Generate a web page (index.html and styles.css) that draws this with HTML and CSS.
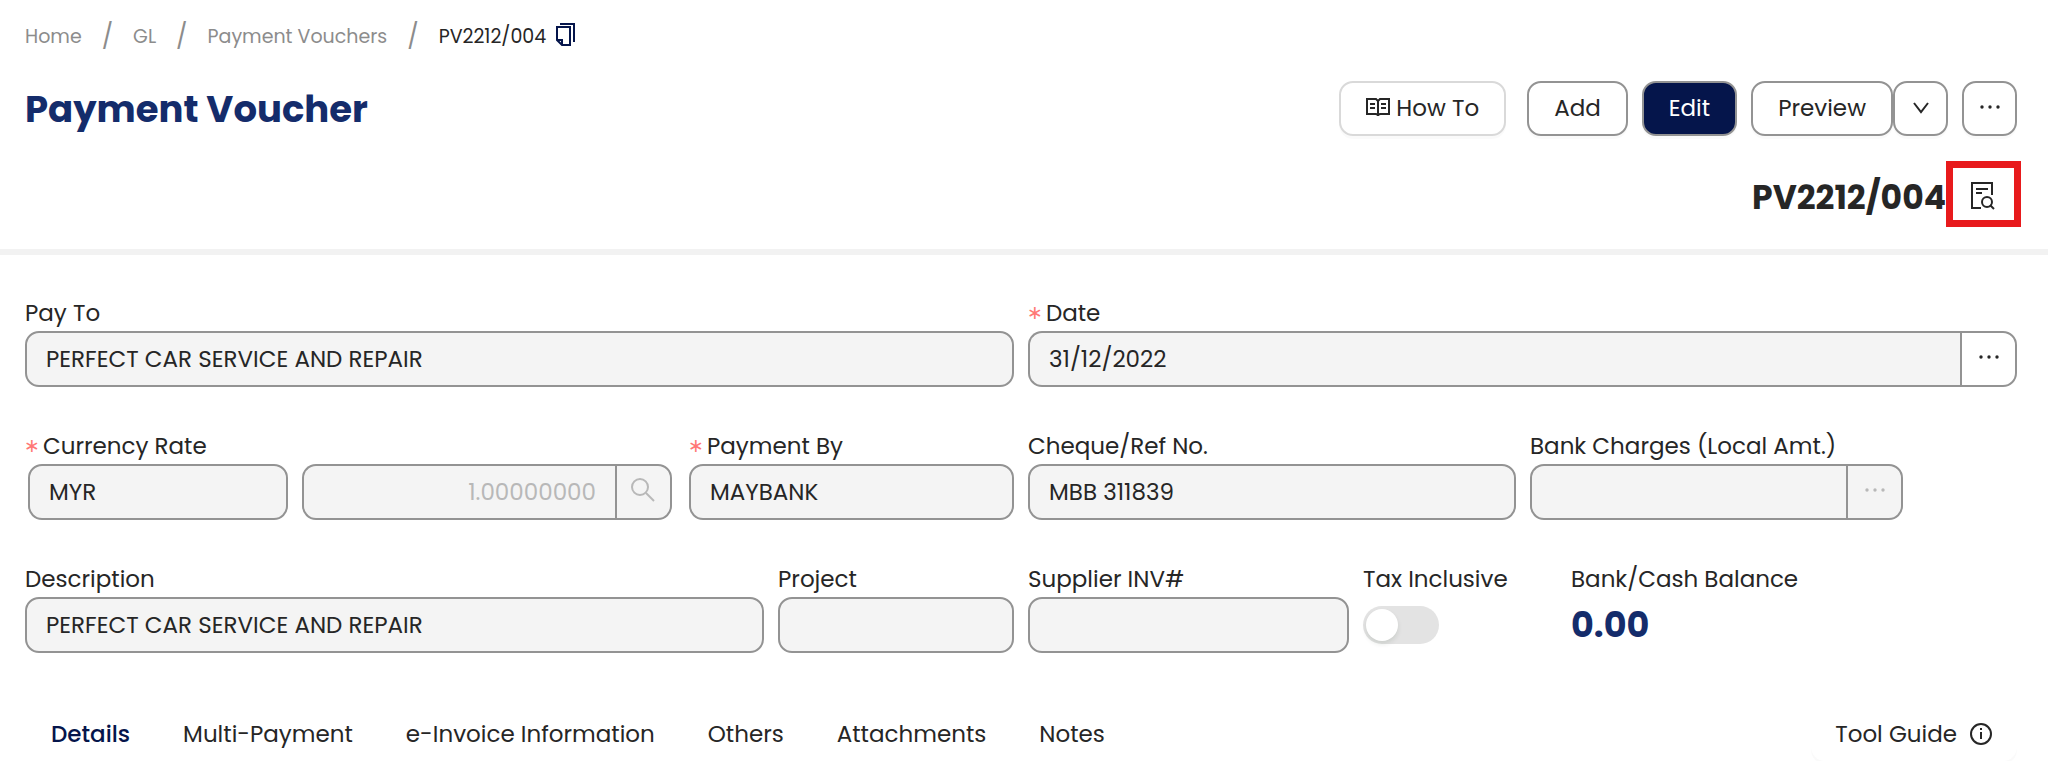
FILE: index.html
```html
<!DOCTYPE html>
<html lang="en">
<head>
    <meta charset="UTF-8">
    <meta name="viewport" content="width=device-width, initial-scale=1.0">
    <title>Payment Voucher</title>
    <link rel="stylesheet" href="styles.css">
</head>
<body>
    <header class="page-header">
        <nav class="breadcrumb" aria-label="Breadcrumb">
            <a href="#">Home</a>
            <span class="slash">/</span>
            <a href="#">GL</a>
            <span class="slash">/</span>
            <a href="#">Payment Vouchers</a>
            <span class="slash">/</span>
            <span class="current">PV2212/004</span>
            <button class="copy-btn" type="button" aria-label="Copy">
                <svg width="19" height="23" viewBox="0 0 19 23" fill="none" stroke="currentColor" stroke-width="2">
                    <path d="M4 1h14v18"/>
                    <path d="M1 4h13v18H6l-5-5z"/>
                    <path d="M1 17h5v5"/>
                </svg>
            </button>
        </nav>

        <div class="title-row">
            <h1>Payment Voucher</h1>
            <div class="actions">
                <button class="btn btn-light" type="button">
                    <svg width="24" height="19" viewBox="0 0 24 19" fill="none" stroke="currentColor" stroke-width="2">
                        <path d="M12 3l-2-2H1v15h9l2 1 2-1h9V1h-9z"/>
                        <path d="M12 3v15M4 6h5M4 10h5M15 6h5M15 10h5"/>
                    </svg>
                    How To
                </button>
                <button class="btn" type="button">Add</button>
                <button class="btn btn-primary" type="button">Edit</button>
                <div class="btn-group">
                    <button class="btn" type="button">Preview</button>
                    <button class="btn btn-square" type="button" aria-label="More previews">
                        <svg width="16" height="12" viewBox="0 0 16 12" fill="none" stroke="currentColor" stroke-width="2">
                            <path d="M1 1l7 9 7-9"/>
                        </svg>
                    </button>
                </div>
                <button class="btn btn-square" type="button" aria-label="More actions">
                    <svg width="22" height="6" viewBox="0 0 22 6" fill="currentColor">
                        <circle cx="3" cy="2" r="1.7"/><circle cx="11" cy="2" r="1.7"/><circle cx="19" cy="2" r="1.7"/>
                    </svg>
                </button>
            </div>
        </div>

        <div class="doc-row">
            <h2>PV2212/004</h2>
            <button class="audit-btn" type="button" aria-label="View audit log">
                <svg width="24" height="28" viewBox="0 0 24 28" fill="none" stroke="currentColor" stroke-width="2">
                    <path d="M10 26H1V1h20v12"/>
                    <path d="M5 7h12M5 11h6"/>
                    <circle cx="16" cy="20" r="5"/>
                    <path d="M19 23l4 4"/>
                </svg>
            </button>
        </div>
    </header>

    <main>
        <form class="voucher-form">
            <div class="row row-payee">
                <div class="field">
                    <label for="payTo">Pay To</label>
                    <input id="payTo" type="text" value="PERFECT CAR SERVICE AND REPAIR" readonly>
                </div>
                <div class="field">
                    <label class="required" for="date">Date</label>
                    <div class="input-group">
                        <input id="date" type="text" value="31/12/2022" readonly>
                        <button class="addon" type="button" aria-label="Date options">
                            <svg width="22" height="8" viewBox="0 0 22 8" fill="currentColor">
                                <circle cx="3" cy="2" r="1.7"/><circle cx="11" cy="2" r="1.7"/><circle cx="19" cy="2" r="1.7"/>
                            </svg>
                        </button>
                    </div>
                </div>
            </div>

            <div class="row row-payment">
                <div class="field">
                    <label class="required" for="currency">Currency Rate</label>
                    <div class="currency">
                        <input id="currency" type="text" value="MYR" readonly>
                        <div class="input-group">
                            <input class="rate" type="text" value="1.00000000" aria-label="Rate" disabled>
                            <button class="addon" type="button" aria-label="Search rate" disabled>
                                <svg width="24" height="28" viewBox="0 0 24 28" fill="none" stroke="currentColor" stroke-width="2">
                                    <circle cx="9" cy="9" r="8"/>
                                    <path d="M15 15l8 8"/>
                                </svg>
                            </button>
                        </div>
                    </div>
                </div>
                <div class="field">
                    <label class="required" for="paymentBy">Payment By</label>
                    <input id="paymentBy" type="text" value="MAYBANK" readonly>
                </div>
                <div class="field">
                    <label for="cheque">Cheque/Ref No.</label>
                    <input id="cheque" type="text" value="MBB 311839" readonly>
                </div>
                <div class="field">
                    <label for="charges">Bank Charges (Local Amt.)</label>
                    <div class="input-group">
                        <input id="charges" type="text" readonly>
                        <button class="addon" type="button" aria-label="Bank charge options" disabled>
                            <svg width="22" height="8" viewBox="0 0 22 8" fill="currentColor">
                                <circle cx="3" cy="2" r="1.7"/><circle cx="11" cy="2" r="1.7"/><circle cx="19" cy="2" r="1.7"/>
                            </svg>
                        </button>
                    </div>
                </div>
            </div>

            <div class="row row-details">
                <div class="field">
                    <label for="description">Description</label>
                    <input id="description" type="text" value="PERFECT CAR SERVICE AND REPAIR" readonly>
                </div>
                <div class="field">
                    <label for="project">Project</label>
                    <input id="project" type="text" readonly>
                </div>
                <div class="field">
                    <label for="supplierInv">Supplier INV#</label>
                    <input id="supplierInv" type="text" readonly>
                </div>
                <div class="field">
                    <label for="taxInclusive">Tax Inclusive</label>
                    <div class="control">
                        <input id="taxInclusive" class="switch" type="checkbox" role="switch">
                    </div>
                </div>
                <div class="field">
                    <label for="balance">Bank/Cash Balance</label>
                    <output id="balance" class="control balance">0.00</output>
                </div>
            </div>
        </form>

        <div class="tab-bar">
            <div class="tabs" role="tablist">
                <button class="tab active" type="button" role="tab" aria-selected="true">Details</button>
                <button class="tab" type="button" role="tab">Multi-Payment</button>
                <button class="tab" type="button" role="tab">e-Invoice Information</button>
                <button class="tab" type="button" role="tab">Others</button>
                <button class="tab" type="button" role="tab">Attachments</button>
                <button class="tab" type="button" role="tab">Notes</button>
            </div>
            <button class="tool-guide" type="button">
                Tool Guide
                <svg width="24" height="24" viewBox="0 0 24 24" fill="none" stroke="currentColor" stroke-width="2">
                    <circle cx="12" cy="12" r="10"/>
                    <path d="M12 10v7M12 6v2"/>
                </svg>
            </button>
        </div>
    </main>
</body>
</html>
```
FILE: styles.css
```css
* {
    box-sizing: border-box;
}

body {
    margin: 0;
    background: #fff;
    color: #262626;
    font-family: 'Poppins', 'Inter', sans-serif;
    font-size: 23px;
    line-height: 34px;
}

button,
input {
    font: inherit;
    color: inherit;
}

button {
    cursor: pointer;
}

h1,
h2 {
    margin: 0;
    font-weight: 700;
}

/* Header */
.page-header {
    padding: 20px 31px 22px 25px;
    border-bottom: 6px solid #f2f2f2;
}

.breadcrumb {
    display: flex;
    align-items: center;
    height: 34px;
    font-size: 19px;
    color: #8c8c8c;
}

.breadcrumb a {
    color: inherit;
    text-decoration: none;
}

.slash {
    margin: 0 20px;
    font-size: 24px;
}

.breadcrumb .current {
    color: #262626;
}

.copy-btn {
    display: flex;
    margin-left: 10px;
    padding: 0 0 6px;
    border: 0;
    background: none;
    color: #05154b;
}

.title-row {
    display: flex;
    justify-content: space-between;
    align-items: center;
    margin-top: 27px;
}

.title-row h1 {
    font-size: 37px;
    line-height: 48px;
    color: #142c6b;
}

.actions {
    display: flex;
    gap: 14px;
}

.btn {
    display: flex;
    align-items: center;
    justify-content: center;
    gap: 6px;
    height: 55px;
    padding: 0 25px 2px;
    border: 2px solid #939393;
    border-radius: 14px;
    background: #fff;
    box-shadow: 0 3px 0 rgba(0, 0, 0, 0.02);
}

.btn-light {
    margin-right: 7px;
    border-color: #d9d9d9;
}

.btn-primary {
    background: #05154b;
    color: #fff;
}

.btn-square {
    width: 55px;
    padding: 0 0 2px;
}

.btn-group {
    display: flex;
}

.doc-row {
    display: flex;
    justify-content: flex-end;
    align-items: center;
    margin-top: 25px;
    margin-right: -4px;
}

.doc-row h2 {
    padding-top: 8px;
    font-size: 33px;
    line-height: 40px;
}

.audit-btn {
    display: flex;
    align-items: center;
    justify-content: center;
    width: 75px;
    height: 66px;
    padding: 4px 2px 0 0;
    border: 7px solid #e81a1c;
    background: #fff;
}

/* Form */
.voucher-form {
    display: grid;
    gap: 43px;
    padding: 42px 31px 0 25px;
}

.row {
    display: grid;
    gap: 14px;
}

.row-payee {
    grid-template-columns: 1fr 1fr;
}

.row-payment {
    grid-template-columns: 650fr 325fr 488fr 373fr 100fr;
}

.row-details {
    grid-template-columns: 739fr 236fr 321fr 194fr 446fr;
}

.field {
    display: flex;
    flex-direction: column;
    min-width: 0;
}

.field label {
    height: 34px;
    line-height: 32px;
    white-space: nowrap;
}

.required::before {
    content: '∗';
    margin: 0 3px 0 -1px;
    font-family: 'DejaVu Sans', sans-serif;
    font-size: 19px;
    line-height: 1;
    vertical-align: 2px;
    color: #ff7875;
}

.field input[type="text"] {
    width: 100%;
    min-width: 0;
    height: 56px;
    padding: 0 19px;
    border: 2px solid #939393;
    border-radius: 14px;
    background: #f4f4f4;
    outline: none;
}

.input-group {
    display: flex;
    min-width: 0;
}

.field .input-group input {
    flex: 1;
    border-right: 0;
    border-radius: 14px 0 0 14px;
}

.addon {
    display: flex;
    align-items: center;
    justify-content: center;
    flex: none;
    width: 57px;
    padding: 0;
    border: 2px solid #939393;
    border-radius: 0 14px 14px 0;
    background: #fff;
}

.addon:disabled,
.field .rate {
    color: #b8b8b8;
}

.addon:disabled {
    background: #f4f4f4;
}

.field .rate {
    text-align: right;
}

.currency {
    display: grid;
    grid-template-columns: 260fr 369fr;
    gap: 14px;
    padding: 0 3px;
}

.control {
    display: flex;
    align-items: center;
    height: 56px;
}

.switch {
    appearance: none;
    display: flex;
    align-items: center;
    width: 76px;
    height: 38px;
    margin: 0;
    padding: 3px;
    border-radius: 19px;
    background: #e3e3e3;
}

.switch::before {
    content: '';
    width: 32px;
    height: 32px;
    border-radius: 50%;
    background: #fff;
    box-shadow: 0 3px 5px rgba(0, 35, 11, 0.1);
}

.switch:checked {
    background: #05154b;
    justify-content: flex-end;
}

.balance {
    font-size: 35px;
    font-weight: 700;
    color: #142c6b;
}

/* Tabs */
.tab-bar {
    display: flex;
    justify-content: space-between;
    align-items: center;
    padding: 53px 31px 0 51px;
}

.tabs {
    display: flex;
    gap: 53px;
}

.tab {
    padding: 0;
    border: 0;
    background: none;
}

.tab.active {
    color: #05154b;
    font-weight: 500;
}

.tool-guide {
    display: flex;
    align-items: center;
    gap: 12px;
    height: 55px;
    padding: 0 24px;
    border: 0;
    border-radius: 14px;
    background: #fff;
    box-shadow: 0 3px 0 rgba(0, 0, 0, 0.02);
}
```
